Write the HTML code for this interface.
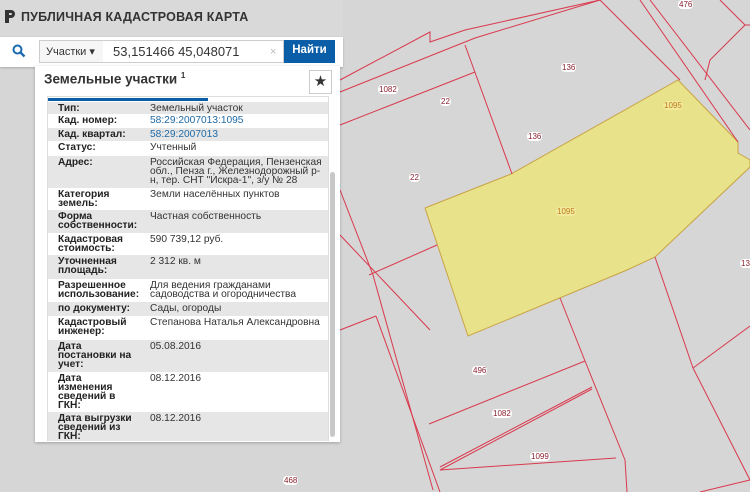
<!DOCTYPE html>
<html><head><meta charset="utf-8"><style>
*{margin:0;padding:0;box-sizing:border-box}
body{width:750px;height:492px;overflow:hidden;background:#d6d6d6;font-family:"Liberation Sans","DejaVu Sans",sans-serif;position:relative}
#map{position:absolute;left:0;top:0}
.hdr{position:absolute;left:0;top:0;width:343px;height:36px;background:#d9d9d9}
.hdr .t{position:absolute;left:21px;top:10px;font-size:12.5px;font-weight:bold;color:#333;letter-spacing:0.2px}
.sb{position:absolute;left:0;top:37px;width:343px;height:30px;background:#fff;box-shadow:0 1px 2px rgba(0,0,0,.2)}
.sel{position:absolute;left:39px;top:40px;width:65px;height:23px;border:1px solid #ccc;background:#f6f6f6;font-size:11px;color:#333;padding:4px 0 0 6px}
.inp{position:absolute;left:103px;top:40px;width:181px;height:23px;border:1px solid #ccc;border-left:none;background:#fff;font-size:13px;color:#333;padding:3px 0 0 10px}
.btn{position:absolute;left:284px;top:40px;width:51px;height:23px;background:#0a5ea8;color:#fff;font-size:11.5px;font-weight:bold;text-align:center;padding-top:4px}
.panel{position:absolute;left:35px;top:66px;width:305px;height:376px;background:#fff;box-shadow:0 1px 3px rgba(0,0,0,.25)}
.ttl{position:absolute;left:44px;top:71px;font-size:13.5px;font-weight:bold;color:#333}
.ttl sup{font-size:8px}
.star{position:absolute;left:309px;top:70px;width:23px;height:24px;border:1px solid #ccc;background:#fff;font-size:15px;text-align:center;line-height:22px;color:#333}
.tbl{position:absolute;left:47px;top:96px;width:282px;height:345px;border:1px solid #ddd;border-bottom:none;overflow:hidden}
.bar{position:absolute;left:48px;top:98px;width:160px;height:3px;background:#0a5ea8}
.r{position:absolute;left:48px;width:280px;font-size:10.2px;line-height:9px;color:#333;white-space:nowrap}
.r.g{background:#e6e6e6}
.r b{position:absolute;left:10px;top:2px;color:#222}
.r span{position:absolute;left:102px;top:2px}
.lnk{color:#1f6aa5}
.scr{position:absolute;left:330px;top:172px;width:5px;height:265px;background:#c8c8c8;border-radius:3px}
.lbl{position:absolute;font-size:8px;color:#8a2130;background:#fff;border-radius:4px;padding:0 1px;line-height:9px}
</style></head><body>
<svg id="map" width="750" height="492" viewBox="0 0 750 492">
<rect width="750" height="492" fill="#d6d6d6"/>
<polygon points="425,208 511,174 678,80 738,142 738,153 750,160 750,167 655,257 627,270 468,336" fill="#e8e38a" stroke="#c9a345" stroke-width="1"/>
<g stroke="#d9394d" stroke-width="1" fill="none">
<polyline points="340,80 430,32 430,42 465,30 600,0"/>
<polyline points="340,92 475,38 600,0"/>
<polyline points="340,125 475,72"/>
<line x1="465" y1="45" x2="512" y2="174"/>
<polyline points="600,0 680,80"/>
<polyline points="640,0 738,142"/>
<polyline points="650,0 750,130"/>
<polyline points="720,0 745,25 750,25"/>
<polyline points="745,25 710,60 705,80"/>
<line x1="340" y1="190" x2="373" y2="275"/>
<line x1="340" y1="235" x2="430" y2="330"/>
<line x1="369" y1="275" x2="437" y2="245"/>
<line x1="373" y1="275" x2="433" y2="490"/>
<line x1="340" y1="330" x2="376" y2="316"/>
<line x1="376" y1="316" x2="440" y2="492"/>
<line x1="560" y1="298" x2="585" y2="361"/>
<line x1="585" y1="361" x2="625" y2="460"/>
<line x1="429" y1="424" x2="585" y2="361"/>
<line x1="440" y1="467" x2="592" y2="387"/>
<line x1="440" y1="470" x2="592" y2="389"/>
<line x1="440" y1="470" x2="616" y2="458"/>
<line x1="625" y1="460" x2="627" y2="492"/>
<line x1="655" y1="257" x2="693" y2="368"/>
<line x1="693" y1="368" x2="750" y2="326"/>
<line x1="693" y1="368" x2="750" y2="480"/>
<line x1="700" y1="492" x2="750" y2="480"/>
</g>
</svg>
<div class="lbl" style="left:561px;top:63px">136</div>
<div class="lbl" style="left:378px;top:85px">1082</div>
<div class="lbl" style="left:440px;top:97px">22</div>
<div class="lbl" style="left:527px;top:132px">136</div>
<div class="lbl" style="left:409px;top:173px">22</div>
<div class="lbl" style="left:663px;top:101px;background:#f0ea9a;color:#c07a20">1095</div>
<div class="lbl" style="left:556px;top:207px;background:#f0ea9a;color:#c07a20">1095</div>
<div class="lbl" style="left:740px;top:259px">138</div>
<div class="lbl" style="left:472px;top:366px">496</div>
<div class="lbl" style="left:492px;top:409px">1082</div>
<div class="lbl" style="left:530px;top:452px">1099</div>
<div class="lbl" style="left:283px;top:476px">468</div>
<div class="lbl" style="left:678px;top:0px">476</div>

<div class="hdr"><svg style="position:absolute;left:4px;top:9px" width="12" height="15" viewBox="0 0 12 15"><path d="M1 1h6a4 4 0 010 8H5v5H1z M5 4v2h2a1 1 0 000-2z" fill="#333" fill-rule="evenodd"/></svg><div class="t">ПУБЛИЧНАЯ КАДАСТРОВАЯ КАРТА</div></div>
<div class="sb"></div>
<svg style="position:absolute;left:12px;top:44px" width="14" height="14" viewBox="0 0 14 14"><circle cx="5.5" cy="5.5" r="4" stroke="#1a6bb0" stroke-width="2" fill="none"/><line x1="8.5" y1="8.5" x2="12.5" y2="12.5" stroke="#1a6bb0" stroke-width="2.4"/></svg>
<div class="sel">Участки ▾</div>
<div class="inp">53,151466 45,048071<span style="position:absolute;left:167px;top:5px;font-size:11px;color:#bbb">×</span></div>
<div class="btn">Найти</div>
<div class="panel"></div>
<div class="ttl">Земельные участки <sup>1</sup></div>
<div class="star">★</div>
<div class="tbl"></div>
<div class="bar"></div>
<div class="r g" style="top:102px;height:12px"><b>Тип:</b><span>Земельный участок</span></div>
<div class="r" style="top:114px;height:14px"><b>Кад. номер:</b><span class="lnk">58:29:2007013:1095</span></div>
<div class="r g" style="top:128px;height:13px"><b>Кад. квартал:</b><span class="lnk">58:29:2007013</span></div>
<div class="r" style="top:141px;height:15px"><b>Статус:</b><span>Учтенный</span></div>
<div class="r g" style="top:156px;height:32px"><b>Адрес:</b><span>Российская Федерация, Пензенская<br>обл., Пенза г., Железнодорожный р-<br>н, тер. СНТ "Искра-1", з/у № 28</span></div>
<div class="r" style="top:188px;height:22px"><b>Категория<br>земель:</b><span>Земли населённых пунктов</span></div>
<div class="r g" style="top:210px;height:23px"><b>Форма<br>собственности:</b><span>Частная собственность</span></div>
<div class="r" style="top:233px;height:22px"><b>Кадастровая<br>стоимость:</b><span>590 739,12 руб.</span></div>
<div class="r g" style="top:255px;height:24px"><b>Уточненная<br>площадь:</b><span>2 312 кв. м</span></div>
<div class="r" style="top:279px;height:23px"><b>Разрешенное<br>использование:</b><span>Для ведения гражданами<br>садоводства и огородничества</span></div>
<div class="r g" style="top:302px;height:14px"><b>по документу:</b><span>Сады, огороды</span></div>
<div class="r" style="top:316px;height:24px"><b>Кадастровый<br>инженер:</b><span>Степанова Наталья Александровна</span></div>
<div class="r g" style="top:340px;height:32px"><b>Дата<br>постановки на<br>учет:</b><span>05.08.2016</span></div>
<div class="r" style="top:372px;height:40px"><b>Дата<br>изменения<br>сведений в<br>ГКН:</b><span>08.12.2016</span></div>
<div class="r g" style="top:412px;height:29px"><b>Дата выгрузки<br>сведений из<br>ГКН:</b><span>08.12.2016</span></div>
<div class="scr"></div>
</body></html>
